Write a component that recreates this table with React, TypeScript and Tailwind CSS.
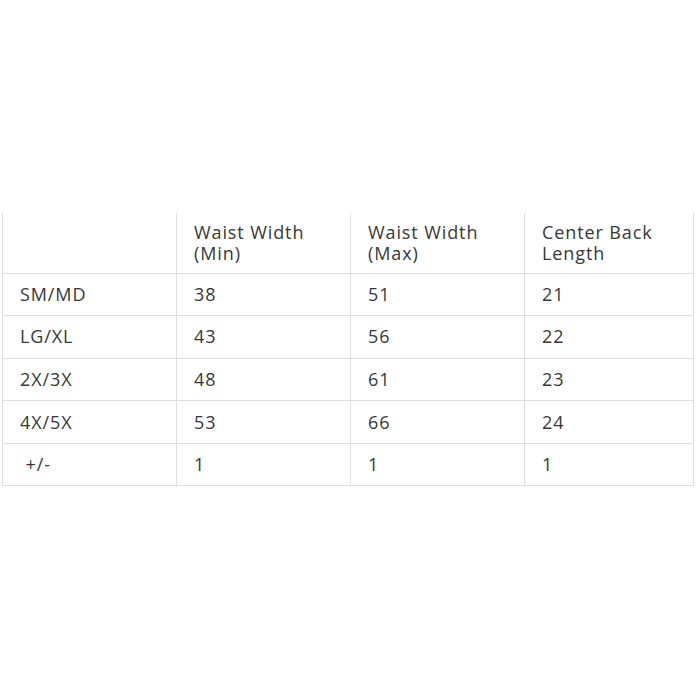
const head = ["", "Waist Width (Min)", "Waist Width (Max)", "Center Back Length"];
const rows = [
  ["SM/MD", "38", "51", "21"],
  ["LG/XL", "43", "56", "22"],
  ["2X/3X", "48", "61", "23"],
  ["4X/5X", "53", "66", "24"],
  ["\u00a0+/-", "1", "1", "1"],
];

export default function App() {
  return (
    <div className="w-[700px] h-[700px] bg-white pt-[213px] pl-[2px] font-['Open_Sans',sans-serif] text-[#383838]">
      <table className="border-collapse table-fixed w-[691px] text-[18px] leading-[21px] tracking-[0.9px]">
        <colgroup>
          <col className="w-[174px]" />
          <col className="w-[174px]" />
          <col className="w-[174px]" />
          <col className="w-[169px]" />
        </colgroup>
        <thead>
          <tr className="h-[60px]">
            {head.map((h, i) => (
              <th key={i} className="border-x border-b border-[#dedede] px-[17px] pt-[9px] pb-[8px] text-left align-top font-normal">
                {h}
              </th>
            ))}
          </tr>
        </thead>
        <tbody>
          {rows.map((r, i) => (
            <tr key={i} className="h-[42.6px]">
              {r.map((c, j) => (
                <td key={j} className="border border-[#dedede] px-[17px] align-middle">
                  {c}
                </td>
              ))}
            </tr>
          ))}
        </tbody>
      </table>
    </div>
  );
}
